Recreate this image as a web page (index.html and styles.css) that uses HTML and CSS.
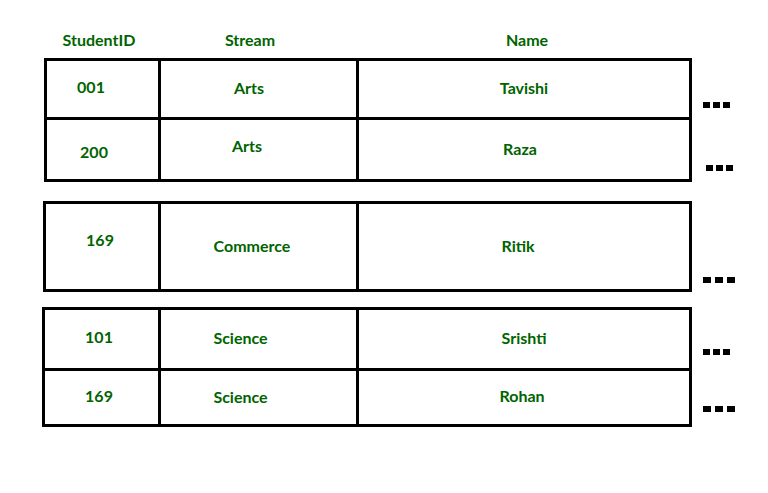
FILE: index.html
```html
<!DOCTYPE html>
<html lang="en">
<head>
<meta charset="utf-8">
<title>Student table partitions</title>
<link rel="stylesheet" href="styles.css">
</head>
<body>
<div class="page">
  <div class="header">
    <div class="h h-id">StudentID</div>
    <div class="h h-stream">Stream</div>
    <div class="h h-name">Name</div>
  </div>

  <div class="block b1">
    <div class="table">
      <div class="row r-a">
        <div class="c id id-a">001</div>
        <div class="c stream st-a">Arts</div>
        <div class="c name">Tavishi</div>
      </div>
      <div class="row r-b">
        <div class="c id id-b">200</div>
        <div class="c stream st-b">Arts</div>
        <div class="c name nm-b">Raza</div>
      </div>
    </div>
    <div class="more">
      <div class="mrow m-a"><span class="dots"><i></i><i></i><i></i></span></div>
      <div class="mrow m-b"><span class="dots shift"><i></i><i></i><i></i></span></div>
    </div>
  </div>

  <div class="block b2">
    <div class="table">
      <div class="row r-c">
        <div class="c id id-c">169</div>
        <div class="c stream st-c">Commerce</div>
        <div class="c name nm-c">Ritik</div>
      </div>
    </div>
    <div class="more">
      <div class="mrow m-c"><span class="dots wide"><i></i><i></i><i></i></span></div>
    </div>
  </div>

  <div class="block b3">
    <div class="table">
      <div class="row r-d">
        <div class="c id id-d">101</div>
        <div class="c stream st-d">Science</div>
        <div class="c name">Srishti</div>
      </div>
      <div class="row r-e">
        <div class="c id id-d">169</div>
        <div class="c stream st-d">Science</div>
        <div class="c name nm-e">Rohan</div>
      </div>
    </div>
    <div class="more">
      <div class="mrow m-d"><span class="dots"><i></i><i></i><i></i></span></div>
      <div class="mrow m-e"><span class="dots wide"><i></i><i></i><i></i></span></div>
    </div>
  </div>
</div>
</body>
</html>
```

FILE: styles.css
```css
*, *::before, *::after { box-sizing: border-box; }

html, body {
  margin: 0;
  padding: 0;
  background: #ffffff;
}

body {
  font-family: Lato, "Open Sans", "Liberation Sans", sans-serif;
  font-weight: 700;
  font-size: 16px;
  color: #006400;
}

.page {
  width: 768px;
  height: 493px;
  padding-top: 30px;
  display: flex;
  flex-direction: column;
}

.header {
  display: flex;
  margin-left: 44px;
  line-height: 20px;
  height: 20px;
  margin-bottom: 8px;
}

.h { text-align: center; flex: none; }
.h-id { width: 117px; padding-right: 7px; }
.h-stream { width: 198px; padding-right: 20px; }
.h-name { width: 333px; padding-left: 3px; }

.block {
  display: flex;
  align-items: flex-start;
}

.b1 { margin-left: 44px; }
.b2 { margin-left: 43px; margin-top: 19px; }
.b3 { margin-left: 42px; margin-top: 15px; }

.table {
  border: 3px solid #000;
  display: flex;
  flex-direction: column;
  flex: none;
}

.row {
  display: flex;
  align-items: stretch;
}

.row + .row { border-top: 3px solid #000; }

.r-a { height: 56px; }
.r-b { height: 62px; }
.r-c { height: 85px; }
.r-d { height: 58px; }
.r-e { height: 56px; }

.c {
  flex: none;
  display: flex;
  align-items: center;
  justify-content: center;
  line-height: 20px;
  padding-bottom: 2px;
}

.id { width: 111px; }
.b2 .id { width: 112px; }
.b3 .id { width: 113px; }

.stream {
  width: 201px;
  border-left: 3px solid #000;
  border-right: 3px solid #000;
}

.name { width: 330px; }

.id-a { padding-right: 23px; padding-bottom: 5px; }
.id-b { padding-right: 17px; padding-top: 4px; padding-bottom: 0; }
.id-c { padding-right: 4px; padding-bottom: 14px; }
.id-d { padding-right: 5px; padding-bottom: 4px; }

.st-a { padding-right: 19px; }
.st-b { padding-right: 23px; padding-bottom: 8px; }
.st-c { padding-right: 13px; }
.st-d { padding-right: 36px; }

.nm-b { padding-right: 8px; }
.nm-c { padding-right: 12px; }
.nm-e { padding-right: 4px; padding-bottom: 4px; }

.more {
  display: flex;
  flex-direction: column;
}

.mrow {
  display: flex;
  align-items: flex-end;
  padding-left: 11px;
}

.m-a { height: 62px; padding-bottom: 12px; }
.m-b { height: 62px; padding-bottom: 11px; }
.m-c { height: 91px; padding-bottom: 9px; }
.m-d { height: 64px; padding-bottom: 16px; }
.m-e { height: 56px; padding-bottom: 15px; }

.dots {
  display: flex;
  gap: 3px;
}

.dots i {
  display: block;
  width: 7px;
  height: 6px;
  background: #000;
}

.dots.shift { margin-left: 3px; }
.dots.wide { gap: 4px; }
.dots.wide i { width: 8px; }
```
